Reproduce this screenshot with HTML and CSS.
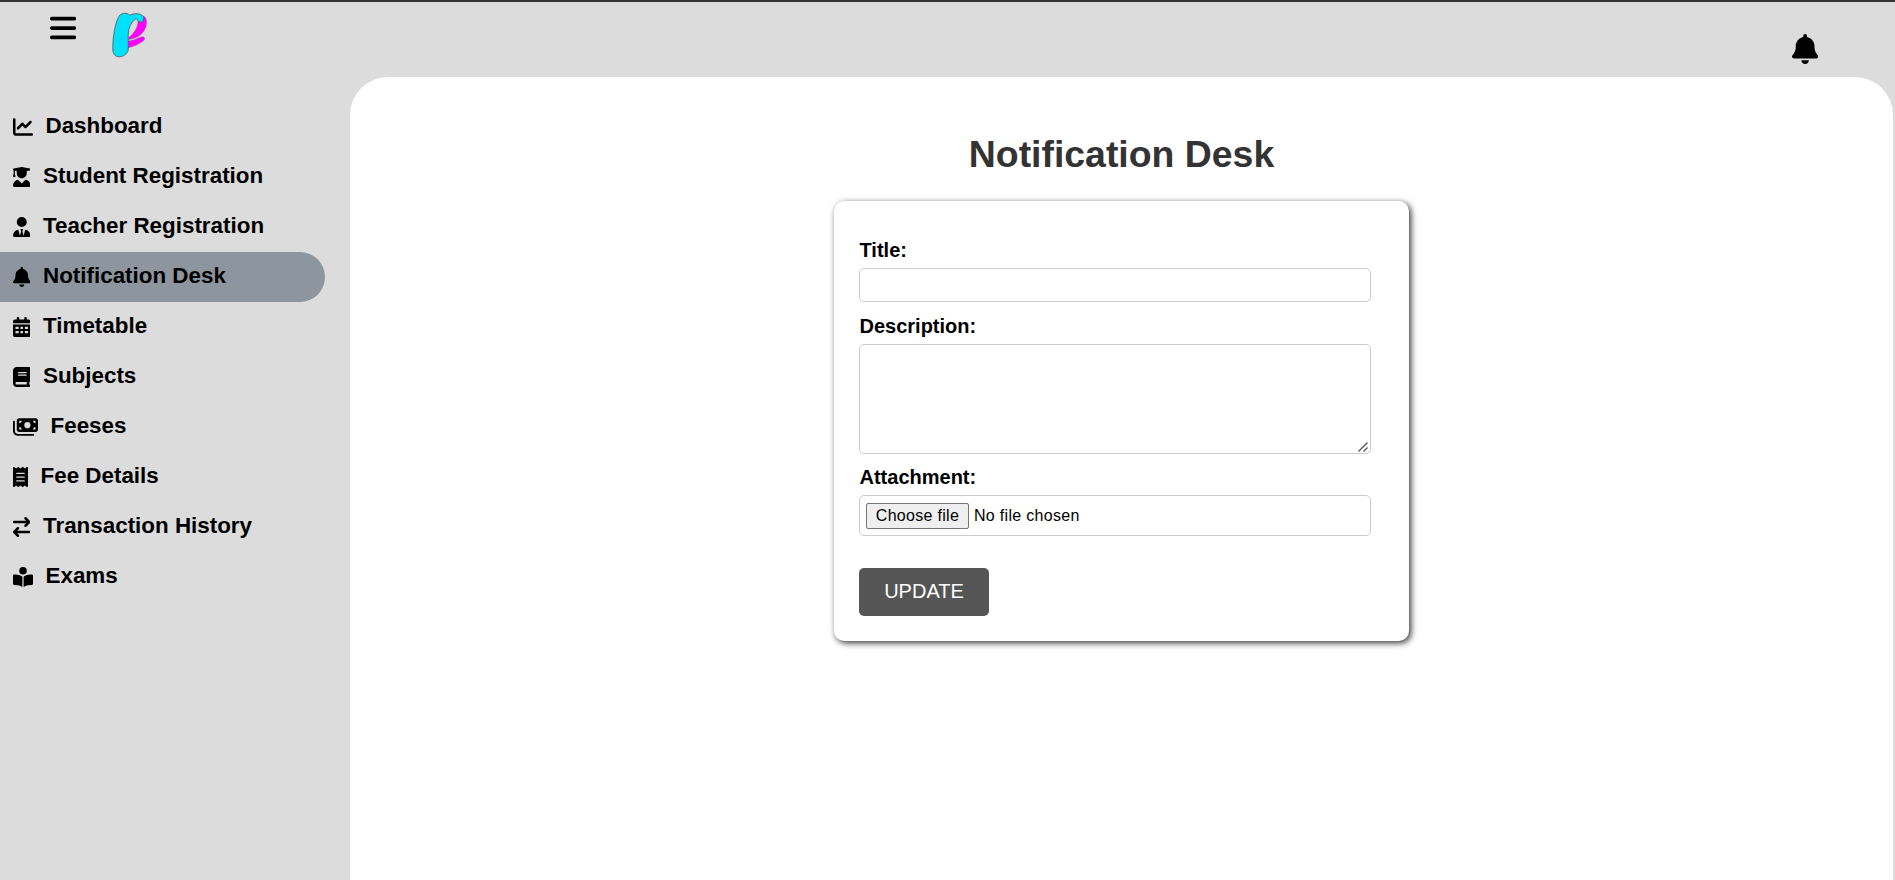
FILE: index.html
```html
<!DOCTYPE html>
<html lang="en">
<head>
<meta charset="utf-8">
<title>Notification Desk</title>
<link rel="stylesheet" href="styles.css">
</head>
<body>
<header class="topbar">
  <div class="brand">
    <svg class="menu-icon" viewBox="0 0 448 512"><path d="M0 96C0 78.300 14.300 64 32 64H416c17.700 0 32 14.300 32 32s-14.300 32-32 32H32C14.300 128 0 113.700 0 96zM0 256c0-17.700 14.300-32 32-32H416c17.700 0 32 14.300 32 32s-14.300 32-32 32H32c-17.700 0-32-14.300-32-32zM448 416c0 17.700-14.300 32-32 32H32c-17.700 0-32-14.300-32-32s14.300-32 32-32H416c17.700 0 32 14.300 32 32z"/></svg>
    <svg class="logo" viewBox="0 0 36 46">
      <path d="M31 4C35 5 35.500 11 33.500 16C31 22 25 27 16.500 27.500L16.500 25.500C22 22 26 15 26 9Z" fill="#f0f" stroke="#777" stroke-width=".4"/>
      <path d="M15.500 29C22 29 27 25 30.500 24.800C33 24.800 33.500 27.200 31.500 28.800C27 32 21.500 35 15.500 36Z" fill="#f0f" stroke="#777" stroke-width=".4"/>
      <path d="M7.500 3.500C10 .8 15 .4 17.700 3.200C21 1.300 29 .8 31.300 4.500C33 8 30 11 27 10C25.700 9.500 25.500 7.500 24.500 6.800C20 8.500 16.500 15 16.200 23L16.200 38C15.500 42 11 45 6.500 44.800C3 44.500 1.200 42 .8 38C.5 26 3 10 7.500 3.500Z" fill="#00e1ff" stroke="#555" stroke-width=".8"/>
    </svg>
  </div>
  <svg class="alert-icon" viewBox="0 0 448 512"><use href="#bell"/></svg>
</header>
<div class="layout">
  <nav class="sidebar">
    <a class="nav-item"><svg class="icon" viewBox="0 0 512 512"><path d="M64 64c0-17.700-14.300-32-32-32S0 46.300 0 64V400c0 44.200 35.800 80 80 80H480c17.700 0 32-14.300 32-32s-14.300-32-32-32H80c-8.800 0-16-7.200-16-16V64zm406.600 86.600c12.500-12.500 12.500-32.800 0-45.300s-32.800-12.500-45.300 0L320 210.700l-57.400-57.400c-12.500-12.500-32.800-12.500-45.300 0l-112 112c-12.500 12.500-12.500 32.800 0 45.300s32.800 12.500 45.300 0L240 221.300l57.400 57.400c12.500 12.500 32.800 12.500 45.300 0l128-128z"/></svg><span class="nav-text">Dashboard</span></a>
    <a class="nav-item"><svg class="icon" viewBox="0 0 448 512"><path d="M219.300 .5c3.100-.6 6.300-.6 9.400 0l200 40C439.900 42.700 448 52.600 448 64s-8.100 21.300-19.300 23.500L352 102.900V160c0 70.700-57.300 128-128 128s-128-57.300-128-128V102.900L48 93.300v65.100l15.700 78.400c.9 4.700-.3 9.600-3.300 13.300s-7.600 5.900-12.400 5.900H16c-4.800 0-9.300-2.100-12.400-5.900s-4.300-8.600-3.300-13.300L16 158.400V86.600C6.500 83.300 0 74.300 0 64C0 52.600 8.100 42.700 19.300 40.500l200-40zM111.900 327.700c10.500-3.400 21.800 .4 29.400 8.500l71 75.500c6.300 6.700 17 6.700 23.300 0l71-75.500c7.600-8.100 18.900-11.900 29.400-8.500C401 348.600 448 409.400 448 481.300c0 17-13.800 30.700-30.700 30.700H30.700C13.800 512 0 498.200 0 481.300c0-71.900 47-132.700 111.900-153.600z"/></svg><span class="nav-text">Student Registration</span></a>
    <a class="nav-item"><svg class="icon" viewBox="0 0 448 512"><path d="M96 128a128 128 0 1 0 256 0A128 128 0 1 0 96 128zm94.500 200.200l18.600 31L175.800 483.100l-36-146.900c-2-8.100-9.800-13.400-17.900-11.300C51.900 342.400 0 405.800 0 481.300c0 17 13.800 30.700 30.700 30.700H162.500H168 280h5.500H417.300c17 0 30.700-13.800 30.700-30.700c0-75.500-51.900-138.900-121.900-156.400c-8.100-2-15.900 3.300-17.900 11.300l-36 146.900L238.900 359.200l18.600-31c6.400-10.700-1.300-24.200-13.700-24.200H224 204.300c-12.400 0-20.100 13.600-13.700 24.200z"/></svg><span class="nav-text">Teacher Registration</span></a>
    <a class="nav-item active"><svg class="icon" viewBox="0 0 448 512"><path id="bell" d="M224 0c-17.700 0-32 14.300-32 32V51.200C119 66 64 130.600 64 208v18.800c0 47-17.300 92.400-48.500 127.600l-7.400 8.300c-8.400 9.400-10.400 22.900-5.300 34.400S19.400 416 32 416H416c12.600 0 24-7.400 29.200-18.900s3.100-25-5.300-34.400l-7.400-8.300C401.300 319.200 384 273.900 384 226.800V208c0-77.400-55-142-128-156.800V32c0-17.700-14.300-32-32-32zm45.300 493.300c12-12 18.700-28.300 18.700-45.300H224 160c0 17 6.700 33.300 18.700 45.300s28.300 18.700 45.300 18.700s33.300-6.700 45.300-18.700z"/></svg><span class="nav-text">Notification Desk</span></a>
    <a class="nav-item"><svg class="icon" viewBox="0 0 448 512"><path fill-rule="evenodd" d="M128 0c17.700 0 32 14.300 32 32V64H288V32c0-17.700 14.300-32 32-32s32 14.300 32 32V64h48c26.500 0 48 21.500 48 48v48H0V112C0 85.500 21.500 64 48 64H96V32c0-17.700 14.300-32 32-32zM0 192H448V464c0 26.500-21.500 48-48 48H48c-26.500 0-48-21.500-48-48V192zM64 248v56h80v-56zM192 248v56h64v-56zM304 248v56h80v-56zM64 360v56h80v-56zM192 360v56h64v-56zM304 360v56h80v-56z"/></svg><span class="nav-text">Timetable</span></a>
    <a class="nav-item"><svg class="icon" viewBox="0 0 448 512"><path d="M96 0C43 0 0 43 0 96V416c0 53 43 96 96 96H384h32c17.700 0 32-14.300 32-32s-14.300-32-32-32V384c17.700 0 32-14.300 32-32V32c0-17.700-14.300-32-32-32H384 96zm0 384H352v64H96c-17.700 0-32-14.300-32-32s14.300-32 32-32zm32-240c0-8.800 7.200-16 16-16H336c8.800 0 16 7.200 16 16s-7.200 16-16 16H144c-8.800 0-16-7.200-16-16zm16 48H336c8.800 0 16 7.200 16 16s-7.200 16-16 16H144c-8.800 0-16-7.200-16-16s7.200-16 16-16z"/></svg><span class="nav-text">Subjects</span></a>
    <a class="nav-item"><svg class="icon" viewBox="0 0 640 512"><path d="M96 96V320c0 35.300 28.700 64 64 64H576c35.300 0 64-28.700 64-64V96c0-35.300-28.700-64-64-64H160c-35.300 0-64 28.700-64 64zm64 160c35.300 0 64 28.700 64 64H160V256zM224 96c0 35.300-28.700 64-64 64V96h64zM576 256v64H512c0-35.300 28.700-64 64-64zM512 96h64v64c-35.300 0-64-28.700-64-64zM288 208a80 80 0 1 1 160 0 80 80 0 1 1 -160 0zM48 120c0-13.300-10.700-24-24-24S0 106.700 0 120V360c0 66.300 53.700 120 120 120H520c13.300 0 24-10.700 24-24s-10.700-24-24-24H120c-39.800 0-72-32.200-72-72V120z"/></svg><span class="nav-text">Feeses</span></a>
    <a class="nav-item"><svg class="icon" viewBox="0 0 384 512"><path d="M14 2.200C22.500-1.700 32.500-.3 39.600 5.800L80 40.400 120.400 5.800c9-7.700 22.300-7.700 31.200 0L192 40.400 232.400 5.800c9-7.700 22.300-7.700 31.200 0L304 40.400 344.400 5.800c7.100-6.100 17.100-7.500 25.600-3.600s14 12.400 14 21.800V488c0 9.400-5.500 17.900-14 21.800s-18.500 2.500-25.600-3.600L304 471.600l-40.400 34.600c-9 7.700-22.300 7.700-31.200 0L192 471.600l-40.400 34.600c-9 7.700-22.300 7.700-31.200 0L80 471.600 39.600 506.200c-7.100 6.100-17.100 7.500-25.600 3.600S0 497.400 0 488V24C0 14.600 5.500 6.100 14 2.200zM96 144c-8.800 0-16 7.200-16 16s7.200 16 16 16H288c8.800 0 16-7.200 16-16s-7.200-16-16-16H96zM80 352c0 8.800 7.200 16 16 16H288c8.800 0 16-7.200 16-16s-7.200-16-16-16H96c-8.800 0-16 7.200-16 16zM96 240c-8.800 0-16 7.200-16 16s7.200 16 16 16H288c8.800 0 16-7.200 16-16s-7.200-16-16-16H96z"/></svg><span class="nav-text">Fee Details</span></a>
    <a class="nav-item"><svg class="icon" viewBox="0 0 448 512"><path d="M438.600 150.600c12.500-12.500 12.500-32.800 0-45.300l-96-96c-12.500-12.500-32.800-12.500-45.300 0s-12.500 32.800 0 45.300L338.700 96 32 96C14.300 96 0 110.300 0 128s14.300 32 32 32l306.700 0-41.400 41.400c-12.500 12.500-12.500 32.800 0 45.300s32.800 12.500 45.300 0l96-96zm-333.300 352c12.500 12.500 32.800 12.500 45.300 0s12.500-32.800 0-45.300L109.300 416 416 416c17.700 0 32-14.300 32-32s-14.300-32-32-32l-306.700 0 41.400-41.400c12.500-12.500 12.500-32.800 0-45.300s-32.800-12.500-45.300 0l-96 96c-12.500 12.500-12.500 32.800 0 45.300l96 96z"/></svg><span class="nav-text">Transaction History</span></a>
    <a class="nav-item"><svg class="icon" viewBox="0 0 512 512"><path d="M160 96a96 96 0 1 1 192 0A96 96 0 1 1 160 96zm80 152V512l-48.400-24.200c-20.900-10.400-43.500-17-66.800-19.300l-96-9.600C12.500 457.200 0 443.500 0 427V224c0-17.700 14.300-32 32-32H62.300c63.600 0 125.600 19.600 177.700 56zm32 264V248c52.100-36.400 114.100-56 177.700-56H480c17.700 0 32 14.300 32 32V427c0 16.400-12.500 30.200-28.800 31.800l-96 9.600c-23.200 2.300-45.900 8.900-66.800 19.300L272 512z"/></svg><span class="nav-text">Exams</span></a>
  </nav>
  <main class="panel">
    <h1 class="heading">Notification Desk</h1>
    <form class="card">
      <label class="label" for="title">Title:</label>
      <input class="field title-field" id="title" type="text">
      <label class="label" for="description">Description:</label>
      <div class="description">
        <textarea class="field description-field" id="description"></textarea>
        <svg class="grip" viewBox="0 0 10 10"><path d="M.5 9.500L9.500 .5M5.500 9.500L9.500 5.500"/></svg>
      </div>
      <label class="label">Attachment:</label>
      <div class="field file-field">
        <span class="file-button">Choose file</span>
        <span class="file-name">No file chosen</span>
      </div>
      <button class="submit" type="button">UPDATE</button>
    </form>
  </main>
</div>
</body>
</html>
```

FILE: styles.css
```css
* {
  box-sizing: border-box;
}

body {
  margin: 0;
  height: 880px;
  overflow: hidden;
  display: flex;
  flex-direction: column;
  background: #dcdcdc;
  border-top: 2px solid #333;
  font-family: "Liberation Sans", Arial, sans-serif;
  color: #000;
}

.topbar {
  height: 75px;
  flex: none;
  display: flex;
  justify-content: space-between;
  align-items: flex-start;
  padding: 10px 77px 0 50px;
}

.brand {
  display: flex;
  align-items: flex-start;
  gap: 36px;
}

.menu-icon {
  width: 26.25px;
  height: 30px;
  margin-top: 1px;
}

.logo {
  width: 36px;
  height: 46px;
}

.alert-icon {
  width: 26.25px;
  height: 30px;
  margin-top: 21.5px;
}

.layout {
  flex: 1;
  display: flex;
  padding-right: 2px;
}

.sidebar {
  width: 350px;
  flex: none;
  padding: 25px 25px 0 0;
}

.nav-item {
  display: flex;
  align-items: center;
  gap: 13px;
  height: 50px;
  padding-left: 12.5px;
  border-radius: 0 25px 25px 0;
  font-size: 22.4px;
  font-weight: bold;
}

.nav-item.active {
  background: #8d959e;
}

.nav-text {
  padding-bottom: 2px;
}

.icon {
  height: 20px;
  width: auto;
}

.panel {
  flex: 1;
  display: flex;
  flex-direction: column;
  align-items: center;
  background: #fff;
  border-radius: 38px 38px 0 0;
  padding-top: 55px;
}

.heading {
  margin: 0 0 25px;
  font-size: 37.4px;
  line-height: 44px;
  color: #333;
}

.card {
  width: 575px;
  height: 440px;
  display: flex;
  flex-direction: column;
  align-items: flex-start;
  padding: 38px 25px 25px;
  border-radius: 10px;
  background: #fff;
  box-shadow: 2px 2px 6px rgba(0, 0, 0, .8);
}

.label {
  font-size: 20px;
  font-weight: bold;
  line-height: 23px;
  margin-bottom: 6px;
  padding-left: .5px;
}

.field {
  width: 512px;
  margin: 0;
  border: 1px solid #ccc;
  border-radius: 5px;
  background: #fff;
}

.title-field {
  height: 34px;
  margin-bottom: 13px;
}

.description {
  position: relative;
  height: 110px;
  margin-bottom: 12px;
}

.description-field {
  display: block;
  height: 110px;
  resize: none;
}

/* resize handle over the corner of the text area */
.grip {
  position: absolute;
  right: 3px;
  bottom: 2px;
  width: 10px;
  height: 10px;
  fill: none;
  stroke: #555;
  stroke-width: 1.4;
}

.file-field {
  height: 41px;
  display: flex;
  align-items: center;
  gap: 5px;
  padding-left: 6px;
  font-size: 16px;
  letter-spacing: .3px;
}

.file-button {
  height: 26px;
  width: 103px;
  border: 1px solid #767676;
  border-radius: 2px;
  background: #efefef;
  line-height: 23px;
  text-align: center;
}

.file-name {
  line-height: 23px;
  margin-bottom: 1px;
}

.submit {
  width: 130px;
  height: 48px;
  margin-top: 32px;
  padding: 0 0 2px;
  border: 0;
  border-radius: 5px;
  background: #555;
  color: #fff;
  font: 20px "Liberation Sans", Arial, sans-serif;
}
```
